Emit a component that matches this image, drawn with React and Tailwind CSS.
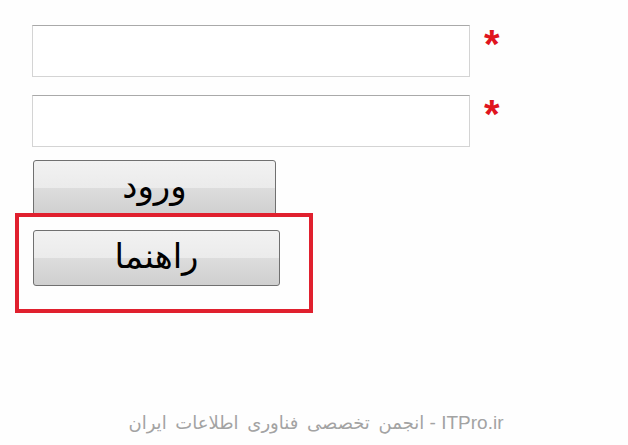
import React from 'react';

const btn =
  'w-full h-full rounded-[3px] border border-[#707070] bg-[linear-gradient(to_bottom,#f2f2f2_0%,#ebebeb_50%,#dddddd_50%,#cfcfcf_100%)] text-black text-[34px] leading-none flex items-center justify-center pb-1';

function Field() {
  return (
    <div className="flex items-start">
      <div className="w-[438px] h-[52px] border border-[#d4d4d4] border-t-[#a9a9a9] bg-white" />
      <span className="ml-[14px] mt-[-1px] text-[#e0141e] text-[40px] font-bold leading-none font-['Liberation_Sans',sans-serif]">
        *
      </span>
    </div>
  );
}

export default function App() {
  return (
    <div className="w-[628px] h-[445px] bg-[#fefefe] relative overflow-hidden font-['DejaVu_Sans',sans-serif]">
      <div className="pt-[25px] pl-[32px] flex flex-col gap-[18px]">
        <Field />
        <Field />
      </div>

      {/* Buttons */}
      <div className="pl-[33px] pt-[13px]">
        <div className="w-[243px] h-[56px]" dir="rtl">
          <button className={btn}>ورود</button>
        </div>
      </div>

      {/* Highlight box */}
      <div className="relative z-10 ml-[15px] mt-[-3px] w-[298px] h-[100px] border-4 border-[#e0202e] pl-[14px] pt-[13px]">
        <div className="w-[247px] h-[56px]" dir="rtl">
          <button className={btn}>راهنما</button>
        </div>
      </div>

      {/* Footer */}
      <div className="mt-[96px] flex justify-center pl-[4px]">
        <p
          dir="rtl"
          className="text-[#a3a3a3] text-[19px] font-['Liberation_Sans','DejaVu_Sans',sans-serif] whitespace-nowrap [text-shadow:1px_1px_0_#ffffff]"
        >
          ITPro.ir - <span className="text-[18px] [word-spacing:3px] font-['DejaVu_Sans',sans-serif]">انجمن تخصصی فناوری اطلاعات ایران</span>
        </p>
      </div>
    </div>
  );
}
